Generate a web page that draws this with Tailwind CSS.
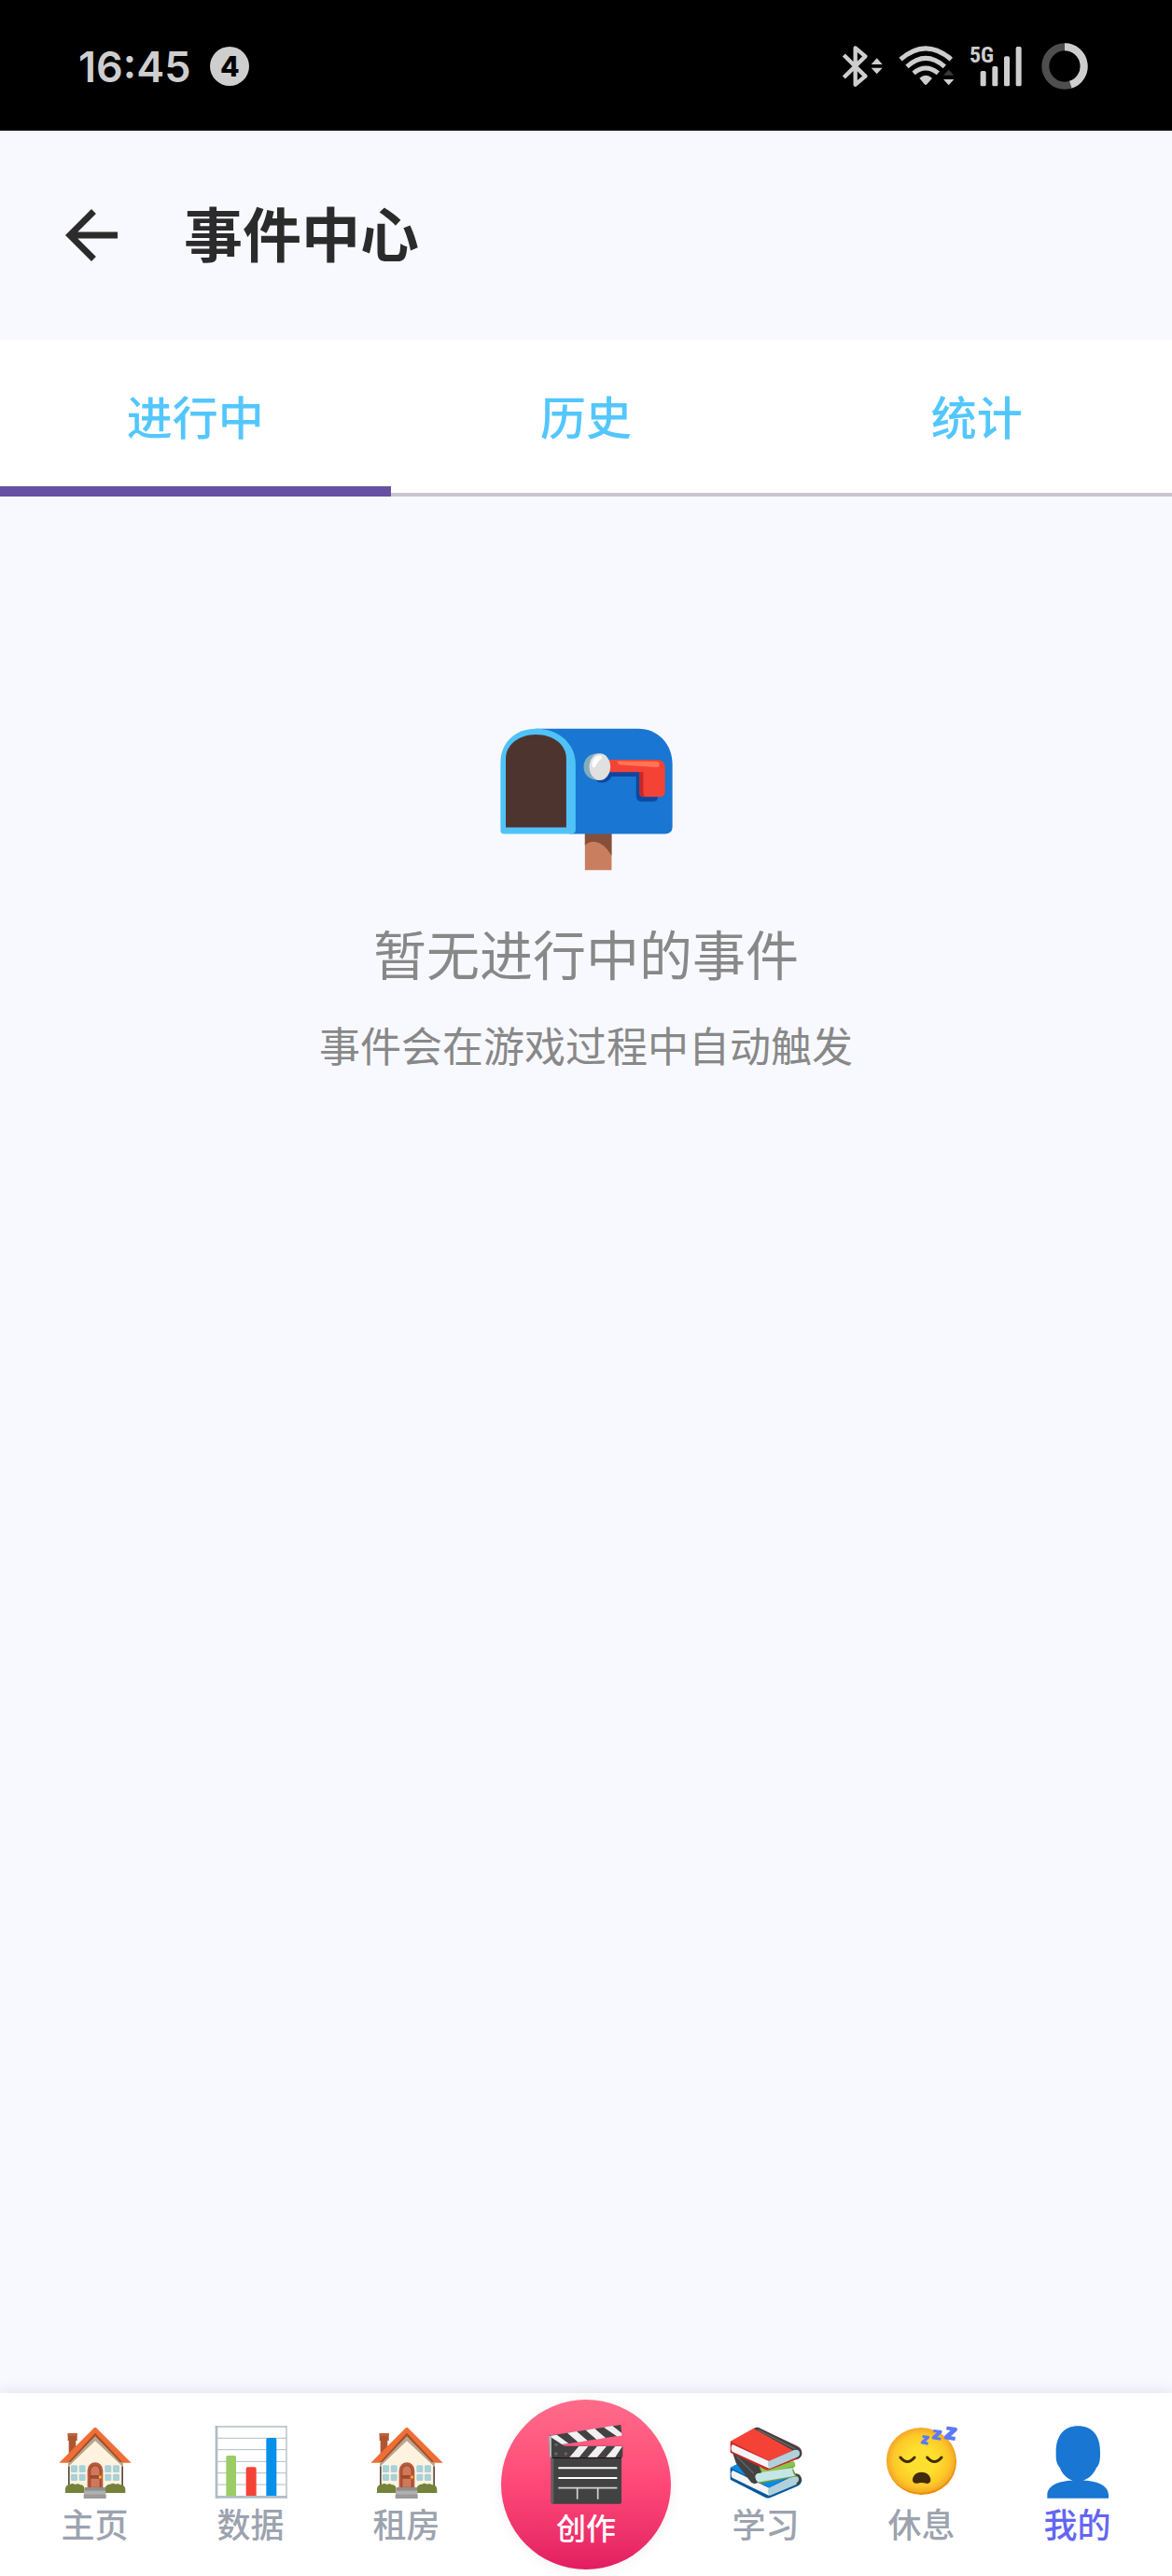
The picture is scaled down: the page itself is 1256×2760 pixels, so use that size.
<!doctype html>
<html lang="zh-CN">
  <head>
    <meta charset="UTF-8" />
    <meta name="viewport" content="width=device-width, initial-scale=1.0" />
    <title>事件中心</title>
    <script src="https://cdn.jsdelivr.net/npm/@tailwindcss/browser@4"></script>
  </head>
  <body class="bg-[#f8f9ff] font-['Noto_Sans_CJK_SC','Noto_Sans',sans-serif]">
    <!-- house is used by two nav items -->
    <svg class="hidden" aria-hidden="true">
      <symbol id="house" viewBox="97 147 234 234">
        <path d="M126 171h30v24h-4v50h-23v-50h-3z" fill="#ae5630" />
        <path d="M126 171h30v9h-30z" fill="#bf6238" />
        <path d="M214 178l89 86v82H127v-82z" fill="#fff3e0" />
        <path d="M127 277h5v68h-5zM299 277h5v68h-5z" fill="#5d4943" />
        <path d="M214 174l89 86v18l-89-83-87 83v-18z" fill="#b9a58c" />
        <path d="M214 163l94 92-10 8-84-82-84 82-10-8z" fill="#9f502d" />
        <path d="M209 155q5-5 10 0l111 111h-27l-89-95-87 95H98z" fill="#ee6e36" />
        <path d="M214 171l89 95h-8l-81-85-80 85h-8z" fill="#a4512c" />
        <path d="M214 181l80 83 9 0v14l-89-83-87 83v-14h8z" fill="#b9a58c" />
        <g fill="#a8d1d8">
          <rect x="136" y="274" width="21" height="23" rx="4" />
          <rect x="162" y="274" width="21" height="23" rx="4" />
          <rect x="136" y="302" width="21" height="22" rx="4" />
          <rect x="162" y="302" width="21" height="22" rx="4" />
          <rect x="245" y="274" width="21" height="23" rx="4" />
          <rect x="271" y="274" width="21" height="23" rx="4" />
          <rect x="245" y="302" width="21" height="22" rx="4" />
          <rect x="271" y="302" width="21" height="22" rx="4" />
        </g>
        <path d="M189 347v-57a25 25 0 0 1 50 0v57z" fill="#b95a3c" />
        <path d="M196 345v-53a18 19 0 0 1 36 0v53z" fill="#9f4a30" />
        <path d="M200 306v-14a14 15 0 0 1 28 0v14zM200 317h28v27h-28z" fill="#d0795a" />
        <circle cx="230" cy="312" r="5" fill="#fbb417" />
        <path d="M118 363v-11c0-10 6-17 16-17 5-4 12-2 15 1 8-4 14-2 17 1 8-1 14 6 14 14v12zM246 363v-12c0-10 7-17 17-16 5-4 12-3 16 0 7-3 13-1 16 2 9-1 16 6 16 15v11z" fill="#74823a" />
        <path d="M181 345h66v12h-66z" fill="#8f8f8f" />
        <path d="M178 356h70v13h-70z" fill="#b0b0b0" />
        <path d="M177 368h72v13h-72z" fill="#9b9b9b" />
      </symbol>
    </svg>

    <div class="flex min-h-screen flex-col">
      <div class="flex h-35 items-center bg-black pt-[2px] pr-[90px] pl-[84px] text-[#cecece]">
        <span class="font-['Inter'] text-[45px] leading-none font-semibold">16:45</span>
        <span class="ml-[21px] flex size-[42px] items-center justify-center rounded-full bg-[#cecece] font-['Inter'] text-[30px] leading-none font-extrabold text-black">4</span>
        <div class="ml-auto flex items-center">
          <svg class="h-[50px] w-[43px]" viewBox="70 48 129 150" fill="none" aria-label="蓝牙">
            <path d="M74 87l69 68-32 27V64l32 27-69 68" stroke="#cecece" stroke-width="13" stroke-linejoin="round" />
            <path d="M162 117l18-20 18 20zM162 128l18 20 18-20z" fill="#cecece" />
          </svg>
          <svg class="ml-[17px] h-[50px] w-[60px]" viewBox="250 48 180 150" fill="none" aria-label="无线网络">
            <g stroke="#cecece" stroke-width="15">
              <path d="M256 101q81-71 163 0" />
              <path d="M277 124q60-54 121 0" />
              <path d="M298 145q39-32 79 0" />
            </g>
            <path d="M317 161q20-18 41 0l-17 20q-4 4-8 0z" fill="#cecece" />
            <path d="M394 152l17-18 17 18z" fill="#3a3a3a" />
            <path d="M394 165l17 19 17-19z" fill="#cecece" />
          </svg>
          <svg class="ml-4 h-[50px] w-[56px] overflow-visible" viewBox="478 48 168 150" fill="#cecece" aria-label="5G 信号">
            <text x="478" y="112" class="font-['Liberation_Sans_Narrow','Roboto_Condensed','Roboto'] text-[72px] font-bold">5G</text>
            <rect x="513" y="138" width="18" height="49" rx="5" />
            <rect x="551" y="123" width="18" height="64" rx="5" />
            <rect x="589" y="91" width="18" height="96" rx="5" />
            <rect x="627" y="60" width="18" height="127" rx="5" />
          </svg>
          <svg class="ml-[21px] size-[50px]" viewBox="707 48 150 150" fill="none" stroke-width="24" aria-label="电量">
            <circle cx="782" cy="123" r="62" stroke="#4e4e4e" />
            <path d="M782 61a62 62 0 0 1 19 121" stroke="#cecece" />
          </svg>
        </div>
      </div>

      <header class="flex h-56 items-center gap-[57px] pl-14">
        <button type="button" aria-label="返回">
          <svg class="size-21" viewBox="0 0 24 24" fill="#2b2b2b">
            <path d="M20 11H7.8l5.6-5.6L12 4l-8 8 8 8 1.4-1.4L7.8 13H20z" />
          </svg>
        </button>
        <h1 class="pb-2.5 text-[63px] leading-none font-bold text-[#2b2b2b]">事件中心</h1>
      </header>

      <div class="grid h-42 grid-cols-3 bg-white text-[49px] leading-none font-medium text-[#53c7fd]" role="tablist">
        <button type="button" role="tab" aria-selected="true" class="relative border-b-4 border-[#cac4d0] pb-1">
          进行中
          <span class="absolute inset-x-0 -bottom-1 h-[11px] bg-[#6750a1]"></span>
        </button>
        <button type="button" role="tab" aria-selected="false" class="border-b-4 border-[#cac4d0] pb-1">历史</button>
        <button type="button" role="tab" aria-selected="false" class="border-b-4 border-[#cac4d0] pb-1">统计</button>
      </div>

      <main class="flex flex-1 flex-col items-center pt-62 text-[#888888]">
        <svg class="h-[153px] w-[185px]" viewBox="45 60 556 460" aria-hidden="true">
          <path d="M318 395h86v123h-86z" fill="#c87e5f" />
          <path d="M318 395h86v76q-26-44-58-45-16 0-28 12z" fill="#864f3b" />
          <path d="M160 62h330c62 0 110 48 110 116v201q0 22-22 22H270L150 250z" fill="#1976d2" />
          <path d="M46 172C46 105 95 62 160 62c72 0 128 46 128 116v210q0 13-13 13H57q-11 0-11-11z" fill="#4fc3f7" />
          <path d="M63 380V158c0-44 43-77 97-77 56 0 98 33 98 77v222z" fill="#4e342e" />
          <path d="M345 218q10 20 32 18 18-3 27-20h79v62q0 19 20 19h32q18 0 18-14l-50-90H390z" fill="#0d47a1" />
          <path d="M392 162h158q26 0 26 26v78q0 16-16 16h-50q-17 0-17-17v-63H392z" fill="#f44336" />
          <path d="M493 202l13-1v66q0 10 7 15-20 0-20-18z" fill="#c62828" />
          <path d="M422 167l128 1q8 1 8 9t-8 9l-116-7q-9 0-12-12z" fill="#ff7555" />
          <path d="M359 142c-26 0-45 18-45 43 0 26 19 43 46 43l15-8V148z" fill="#82aebd" />
          <ellipse cx="366" cy="185" rx="34" ry="43" fill="#e0e0e0" />
          <path d="M341 181c-1-20 13-35 28-32 5 1 5 6 1 10-9 8-14 16-18 24-3 6-10 5-11-2z" fill="#fff" />
        </svg>
        <p class="mt-[51px] text-[57px] leading-[72px]">暂无进行中的事件</p>
        <p class="mt-[35px] text-[44px] leading-[56px]">事件会在游戏过程中自动触发</p>
      </main>

      <nav class="flex h-49 bg-white px-[18px] text-4xl leading-none font-medium text-[#9ca3af] shadow-[0_-2px_14px_rgba(30,30,60,0.10)]">
        <a href="#home" class="flex flex-1 flex-col items-center gap-2 pt-[35px]">
          <svg class="size-[78px]" aria-hidden="true"><use href="#house" /></svg>
          <span class="leading-9">主页</span>
        </a>
        <a href="#data" class="flex flex-1 flex-col items-center gap-2 pt-[35px]">
          <svg class="size-[78px]" viewBox="598 147 234 234" aria-hidden="true">
            <path d="M600 147h231v234H600z" fill="#fff" />
            <path d="M606 187h222M606 224h222M606 262h222M606 299h222M606 336h222" stroke="#b0bec5" stroke-width="3" />
            <path d="M600 150h231M829 147v234" stroke="#b0bec5" stroke-width="4" />
            <path d="M604 147v234M600 376h231" stroke="#b0bec5" stroke-width="8" />
            <path d="M635 372V248q0-5 5-5h22q5 0 5 5v124z" fill="#9ccc65" />
            <path d="M699 372v-87q0-5 5-5h23q5 0 5 5v87z" fill="#f44336" />
            <path d="M764 372V191q0-5 5-5h23q5 0 5 5v181z" fill="#0590ea" />
          </svg>
          <span class="leading-9">数据</span>
        </a>
        <a href="#rent" class="flex flex-1 flex-col items-center gap-2 pt-[35px]">
          <svg class="size-[78px]" aria-hidden="true"><use href="#house" /></svg>
          <span class="leading-9">租房</span>
        </a>
        <div class="flex w-[218px] justify-center pt-[7px]">
          <button type="button" class="flex size-[182px] flex-col items-center gap-[6px] rounded-full bg-linear-to-b from-[#ff6b8a] via-[#ff4777] to-[#e21d62] pt-[27px] text-white shadow-[0_2px_16px_rgba(0,0,0,0.06)]">
            <svg class="h-[85px] w-[80px]" viewBox="206 142 240 255" aria-hidden="true">
              <path d="M214 246h226v145q0 5-5 5H219q-5 0-5-5z" fill="#424242" />
              <path d="M214 246h8v150h-3q-5 0-5-5z" fill="#616161" />
              <path d="M218 248h222" stroke="#111" stroke-width="4" />
              <path d="M237 281h189M237 313h189" stroke="#fff" stroke-width="6" />
              <path d="M237 345h189M298 345v36M364 345v36" stroke="#d4d4d4" stroke-width="5" />
              <path d="M206 177l232-35 3 34-189 29h-40z" fill="#424242" />
              <path d="M208 178l24-4 38 28-27 4zM266 168l30-5 35 30-30 5zM325 159l29-5 35 30-29 5zM383 150l28-5 30 24v8l-16 2z" fill="#f0f0f0" />
              <path d="M222 210h222v36H222z" fill="#424242" />
              <path d="M303 211h30l-29 35h-31zM362 211h30l-30 35h-31zM420 211h23l-23 35h-30z" fill="#f0f0f0" />
              <path d="M207 178l59 38-24 31h-33z" fill="#424242" />
              <path d="M206 178h9v68h-6z" fill="#b4b4b4" />
              <g fill="#686868">
                <circle cx="230" cy="206" r="5" />
                <circle cx="230" cy="235" r="5" />
                <circle cx="261" cy="235" r="5" />
              </g>
            </svg>
            <span class="text-[32px] leading-9">创作</span>
          </button>
        </div>
        <a href="#study" class="flex flex-1 flex-col items-center gap-2 pt-[35px]">
          <svg class="size-[78px]" viewBox="95 147 234 234" aria-hidden="true">
            <!-- blue book -->
            <path d="M97 282l30-16 180 36q20 5 20 20-1 14-16 20l-87 37q-7 2-14-1L97 320z" fill="#01579b" />
            <path d="M97 282l30-16 175 38-80 42z" fill="#0a8be8" />
            <path d="M104 290l118 57v25L103 314q-7-12 1-24z" fill="#f5f5f5" />
            <path d="M220 347l84-41q18 0 17 16 0 10-12 14l-85 36q-10-10-4-25z" fill="#b0d0dc" />
            <path d="M296 306q27-6 25 16-1 8-10 13" fill="none" stroke="#424242" stroke-width="8" />
            <!-- green book -->
            <path d="M180 275l122-13 4 15-8 6 12 27-120 24z" fill="#689f38" />
            <path d="M184 270l118-6 3 13-107 24z" fill="#8bc34a" />
            <path d="M174 300l124-18q-4 12 7 26l-126 22q-16-15-5-30z" fill="#c5e6e4" />
            <path d="M104 233l80 32 14 33-15 3q-14 10 3 29l-11 4q-12-3-18-14l-42-54z" fill="#424242" />
            <path d="M118 246l54 54" stroke="#616161" stroke-width="5" />
            <!-- red book -->
            <path d="M97 199l87-47 128 60q15 8 15 23 0 14-16 20l-87 33q-8 3-15-1L97 233z" fill="#c62828" />
            <path d="M97 197l75-42 133 68-82 37z" fill="#f44336" />
            <path d="M172 156q12-7 22 0l116 56q17 8 17 24-1 13-16 19l-4-5q14-6 13-16-1-12-20-7z" fill="#424242" />
            <path d="M186 160l118 61" stroke="#686868" stroke-width="4" />
            <path d="M104 207l119 55v23L103 230q-7-12 1-23z" fill="#f5f5f5" />
            <path d="M220 261l82-36q18-3 18 11 0 9-12 14l-84 35q-10-10-4-24z" fill="#b0d0dc" />
          </svg>
          <span class="leading-9">学习</span>
        </a>
        <a href="#rest" class="flex flex-1 flex-col items-center gap-2 pt-[35px]">
          <svg class="size-[78px]" viewBox="117 147 234 234" aria-hidden="true">
            <defs>
              <radialGradient id="face" cx="0.5" cy="0.5" r="0.5">
                <stop offset="0.4" stop-color="#fde02f" />
                <stop offset="0.8" stop-color="#fcc827" />
                <stop offset="1" stop-color="#f6a52a" />
              </radialGradient>
            </defs>
            <ellipse cx="233" cy="262" rx="112" ry="107" fill="#eb8f00" />
            <ellipse cx="231" cy="258" rx="111" ry="105" fill="url(#face)" />
            <path d="M165 249q22 27 45 0M251 249q23 27 46 0" fill="none" stroke="#422b0d" stroke-width="9" stroke-linecap="round" />
            <path d="M204 319c2-14 13-23 29-23 15 0 27 9 29 23 1 11-7 16-15 13-9-3-19-3-28 0-9 2-16-3-15-13z" fill="#422b0d" />
            <g fill="#5c79fa">
              <path d="M314 149l31 4q4 2 2 10l-20 18 15 2-2 12-33-5q-3-3 0-11l19-17-14-2z" />
              <path d="M272 159l25 3q3 2 1 8l-15 14 13 2-2 8-27-4q-2-2 0-8l15-13-12-2z" />
              <path d="M237 177l20 3q3 2 1 7l-12 11 9 2-2 9-22-4q-2-2 0-7l12-11-8-2z" />
            </g>
          </svg>
          <span class="leading-9">休息</span>
        </a>
        <a href="#me" aria-current="page" class="flex flex-1 flex-col items-center gap-2 pt-[35px] text-[#6366f1]">
          <svg class="size-[78px]" viewBox="133 147 234 234" aria-hidden="true">
            <path d="M251 148c44 0 72 30 71 83 0 21 0 39-12 51-9 20-21 33-42 41 47 1 81 17 81 47v10H152v-10c0-30 33-46 82-47-21-8-34-22-42-42-12-12-12-29-12-50 0-53 27-83 71-83z" fill="#1976d2" />
          </svg>
          <span class="leading-9">我的</span>
        </a>
      </nav>
    </div>
  </body>
</html>
